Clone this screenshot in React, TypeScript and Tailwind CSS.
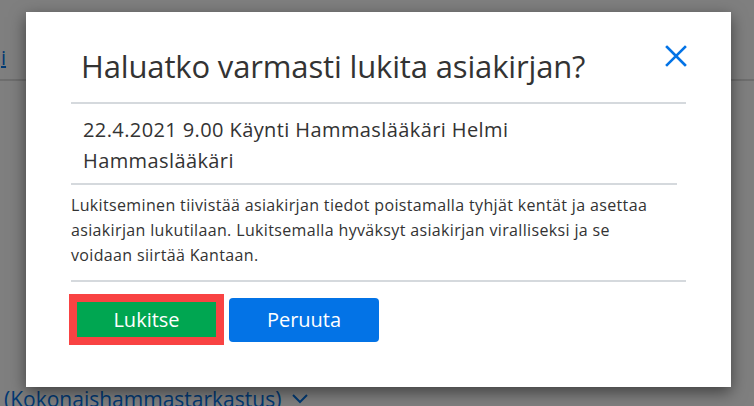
import { useState } from "react";

const fontStack = { fontFamily: '"Open Sans", "Noto Sans", sans-serif' };

function CloseIcon() {
    return (
        <svg width="22" height="22" viewBox="0 0 22 22" fill="none">
            <path d="M2 2 L20 20 M20 2 L2 20" stroke="#0373e6" strokeWidth="2.6" strokeLinecap="square" />
        </svg>
    );
}

function ChevronDown() {
    return (
        <svg width="18" height="12" viewBox="0 0 18 12" fill="none">
            <path d="M2 2 L9 9 L16 2" stroke="currentColor" strokeWidth="2" />
        </svg>
    );
}

function App() {
    const [auki, setAuki] = useState(true);

    return (
        <div className="relative w-[754px] h-[406px] overflow-hidden bg-white text-[#333]" style={fontStack}>
            {/* taustasivu */}
            <div className="flex flex-col h-full">
                <div className="h-[81px] border-b-2 border-[#dcdcdc] flex items-start pt-[46px]">
                    <a className="text-[#0373e6] text-[20px] underline leading-[24px] pl-[1px]">i</a>
                </div>
                <div className="flex-1" />
                <div className="flex items-center gap-[10px] pl-[4px] h-[26px] -mb-[6px] text-[#0373e6] text-[21px] leading-[26px]">
                    <span>(Kokonaishammastarkastus)</span>
                    <ChevronDown />
                </div>
            </div>

            {auki && (
                <div className="absolute inset-0 bg-black/50">
                    <div className="absolute left-[26px] top-[12px] w-[705px] h-[375px] bg-white shadow-[0_5px_15px_rgba(0,0,0,0.5)] px-[45px] pt-[30px]">
                        <div className="flex items-start justify-between pl-[10px] pb-[12px] border-b-2 border-[#d5d9dd]">
                            <h1 className="text-[31px] leading-[48px] font-normal tracking-[-0.15px]">
                                Haluatko varmasti lukita asiakirjan?
                            </h1>
                            <button className="mt-[3px] -mr-[1px]" onClick={() => setAuki(false)}>
                                <CloseIcon />
                            </button>
                        </div>

                        <div className="w-[606px] pl-[12px] pt-[10px] pb-[7px] border-b-2 border-[#d5d9dd]">
                            <p className="w-[480px] text-[20px] leading-[31px] tracking-[0.4px]">
                                22.4.2021 9.00 Käynti Hammaslääkäri Helmi Hammaslääkäri
                            </p>
                        </div>

                        <div className="pt-[8px] pb-[12px] border-b-2 border-[#d5d9dd]">
                            <p className="w-[592px] text-[16px] leading-[25px] tracking-[0.35px]">
                                Lukitseminen tiivistää asiakirjan tiedot poistamalla tyhjät kentät ja asettaa asiakirjan
                                lukutilaan. Lukitsemalla hyväksyt asiakirjan viralliseksi ja se voidaan siirtää Kantaan.
                            </p>
                        </div>

                        <div className="flex items-center gap-[5px] -ml-[2px] mt-[12px]">
                            <div className="border-[8px] border-[#f94343] w-[155px] h-[51px]">
                                <button className="w-full h-full bg-[#00a651] text-white text-[20px] leading-none">
                                    Lukitse
                                </button>
                            </div>
                            <button
                                className="w-[150px] h-[44px] rounded-[4px] bg-[#0373e6] text-white text-[20px] leading-none"
                                onClick={() => setAuki(false)}
                            >
                                Peruuta
                            </button>
                        </div>
                    </div>
                </div>
            )}
        </div>
    );
}

export default App;
